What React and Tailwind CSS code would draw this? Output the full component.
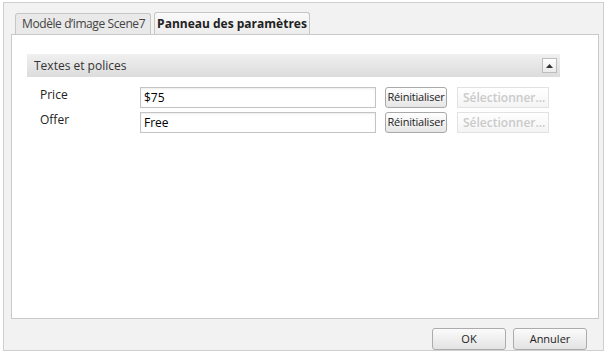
import { useState } from "react";

const font = { fontFamily: '"Open Sans", "Noto Sans", sans-serif' };

const Row = ({ label, value }) => (
	<div className="flex items-center h-[21px] mb-[4px]">
		<div className="w-[113px] shrink-0 pl-[13px] text-[12px] text-[#222] -mt-[6px]">{label}</div>
		<input
			defaultValue={value}
			className="w-[236px] h-[21px] border border-[#c4c4c4] bg-white px-[3px] text-[12px] text-black outline-none shadow-[inset_0_1px_2px_rgba(0,0,0,0.08)]"
		/>
		<button className="ml-[9px] w-[62px] h-[21px] rounded-[3px] border border-[#a9a9a9] bg-gradient-to-b from-white to-[#e6e6e6] text-[11px] tracking-[-0.2px] text-[#222] px-0">
			Réinitialiser
		</button>
		<button
			disabled
			className="ml-[10px] w-[92px] h-[21px] border border-[#e2e2e2] bg-gradient-to-b from-white to-[#f4f4f4] text-[12px] font-semibold text-[#cacaca] text-left pl-[5px] whitespace-nowrap overflow-hidden"
		>
			Sélectionner...
		</button>
	</div>
);

export default function App() {
	const [tab, setTab] = useState(1);

	return (
		<div className="w-[609px] h-[361px] bg-white pt-[2px] pl-[3px] pr-[5px] pb-[10px]" style={font}>
			<div className="w-full h-full border border-[#cfcfcf] bg-[#f2f2f2] flex flex-col pt-[9px] pl-[7px] pr-[4px]">
				<div className="flex h-[22px] items-end">
					<button
						onClick={() => setTab(0)}
						className="ml-[4px] h-[21px] w-[136px] border border-b-0 border-[#c6c6c6] rounded-t-[3px] bg-[#e9e9e9] text-[12px] tracking-[-0.4px] text-[#444] px-[6px] text-left whitespace-nowrap"
					>
						Modèle d’image Scene7
					</button>
					<button
						onClick={() => setTab(1)}
						className="ml-[3px] h-[22px] w-[156px] border border-b-0 border-[#c6c6c6] rounded-t-[3px] bg-gradient-to-b from-[#fafafa] to-[#ececec] text-[12px] font-bold text-[#222] text-center"
					>
						Panneau des paramètres
					</button>
				</div>
				<div className="h-[285px] border border-[#c9c9c9] bg-white pt-[19px] pl-[15px] pr-[38px]">
					<div className="h-[23px] flex items-center justify-between bg-gradient-to-b from-[#f0f0f0] to-[#dcdcdc] pl-[7px] pr-[3px]">
						<span className="text-[12px] text-[#333]">Textes et polices</span>
						<span className="w-[15px] h-[15px] border border-[#bdbdbd] bg-gradient-to-b from-white to-[#eaeaea] flex items-center justify-center">
							<svg width="7" height="4" viewBox="0 0 7 4"><path d="M0 4 L3.5 0 L7 4 Z" fill="#333" /></svg>
						</span>
					</div>
					<div className="pt-[10px]">
						<Row label="Price" value="$75" />
						<Row label="Offer" value="Free" />
					</div>
				</div>
				<div className="flex justify-end gap-[7px] pt-[9px] pr-[12px]">
					<button className="w-[74px] h-[22px] rounded-[3px] border border-[#acacac] bg-gradient-to-b from-[#fbfbfb] to-[#e3e3e3] text-[11px] text-[#222]">OK</button>
					<button className="w-[74px] h-[22px] rounded-[3px] border border-[#acacac] bg-gradient-to-b from-[#fbfbfb] to-[#e3e3e3] text-[11px] text-[#222]">Annuler</button>
				</div>
			</div>
		</div>
	);
}
